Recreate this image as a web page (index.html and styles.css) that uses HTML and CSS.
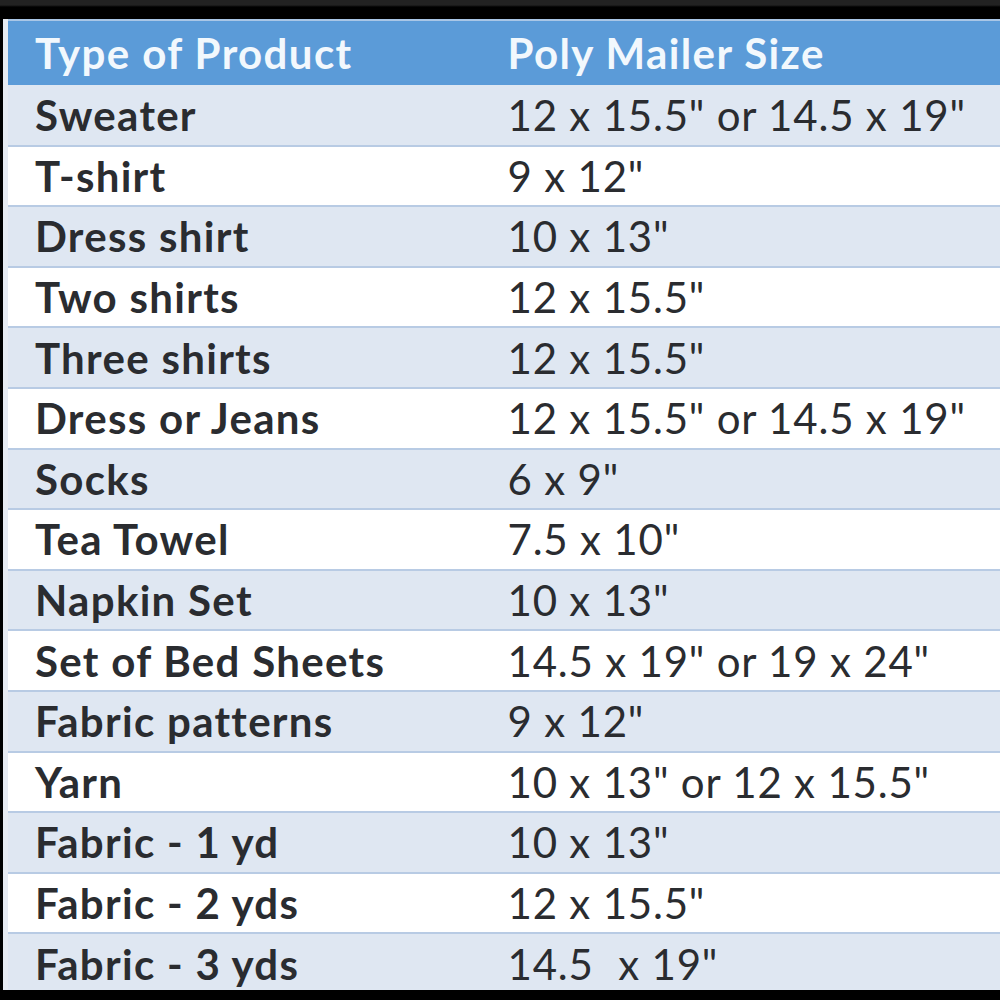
FILE: index.html
```html
<!DOCTYPE html>
<html>
<head>
<meta charset="utf-8">
<link rel="stylesheet" href="styles.css">
</head>
<body>
<div class="frame">
  <table class="sizes">
    <thead>
      <tr><th class="c1">Type of Product</th><th class="c2">Poly Mailer Size</th></tr>
    </thead>
    <tbody>
      <tr class="alt"><td class="c1">Sweater</td><td class="c2">12 x 15.5" or 14.5 x 19"</td></tr>
      <tr><td class="c1">T-shirt</td><td class="c2">9 x 12"</td></tr>
      <tr class="alt"><td class="c1">Dress shirt</td><td class="c2">10 x 13"</td></tr>
      <tr><td class="c1">Two shirts</td><td class="c2">12 x 15.5"</td></tr>
      <tr class="alt"><td class="c1">Three shirts</td><td class="c2">12 x 15.5"</td></tr>
      <tr><td class="c1">Dress or Jeans</td><td class="c2">12 x 15.5" or 14.5 x 19"</td></tr>
      <tr class="alt"><td class="c1">Socks</td><td class="c2">6 x 9"</td></tr>
      <tr><td class="c1">Tea Towel</td><td class="c2">7.5 x 10"</td></tr>
      <tr class="alt"><td class="c1">Napkin Set</td><td class="c2">10 x 13"</td></tr>
      <tr><td class="c1">Set of Bed Sheets</td><td class="c2">14.5 x 19" or 19 x 24"</td></tr>
      <tr class="alt"><td class="c1">Fabric patterns</td><td class="c2">9 x 12"</td></tr>
      <tr><td class="c1">Yarn</td><td class="c2">10 x 13" or 12 x 15.5"</td></tr>
      <tr class="alt"><td class="c1">Fabric - 1 yd</td><td class="c2">10 x 13"</td></tr>
      <tr><td class="c1">Fabric - 2 yds</td><td class="c2">12 x 15.5"</td></tr>
      <tr class="alt"><td class="c1">Fabric - 3 yds</td><td class="c2">14.5 <span class="gap"></span>x 19"</td></tr>
    </tbody>
  </table>
</div>
</body>
</html>
```
FILE: styles.css
```css
html, body {
  margin: 0;
  padding: 0;
  background: #000;
}
body {
  width: 1000px;
  height: 1000px;
  overflow: hidden;
  background: linear-gradient(#222 0, #222 5px, #000 7px);
}
.frame {
  padding: 19px 0 0 3px;
  height: 971px;
  overflow: hidden;
  border-bottom: 10px solid #000;
}
.sizes {
  width: 997px;
  table-layout: fixed;
  border-collapse: collapse;
  font-family: Lato, "Open Sans", sans-serif;
  background: #fff;
  border-left: 5px solid #e6ebf2;
}
.sizes th {
  background: #5b9bd8;
  color: #f2f8fd;
  font-weight: 700;
  font-size: 42px;
  height: 65px;
  text-align: left;
  vertical-align: middle;
  padding: 0;
  border-top: 2px solid #a9c6e6;
  box-sizing: border-box;
  letter-spacing: 1.4px;
}
.sizes td {
  height: 60.6px;
  padding: 0;
  font-size: 42px;
  color: #2a2c30;
  border-bottom: 2px solid #b8cbe4;
  box-sizing: border-box;
  vertical-align: middle;
}
.sizes tr.alt td {
  background: #dfe7f2;
}
.sizes .c1 {
  width: 502px;
  padding-left: 27px;
}
.sizes td.c1 {
  font-weight: 700;
  letter-spacing: 1.3px;
}
.sizes td.c2 {
  font-weight: 400;
  letter-spacing: 0.8px;
}
.gap {
  display: inline-block;
  width: 13px;
}
```
